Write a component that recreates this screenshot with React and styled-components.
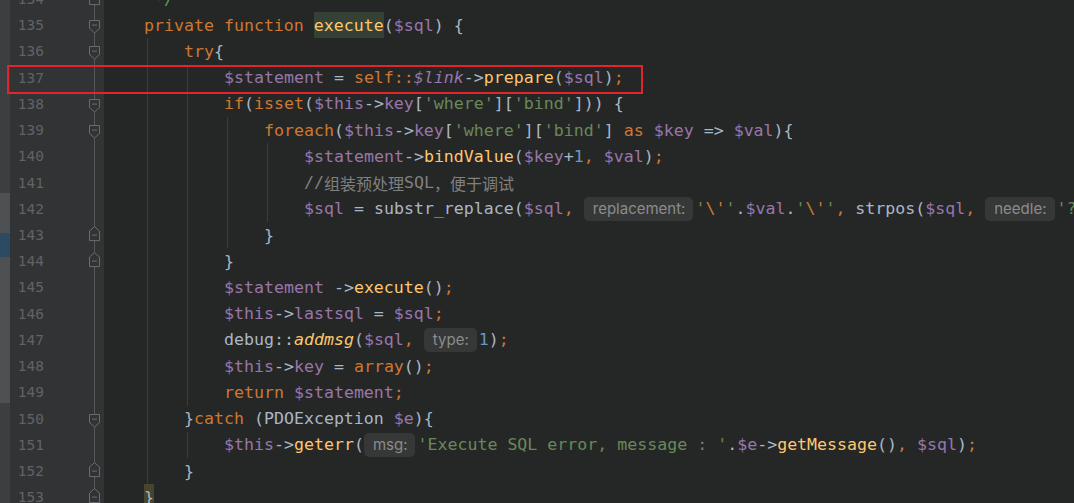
import styled, { createGlobalStyle } from "styled-components";

const LINE_H = 26.22;

const Global = createGlobalStyle`
  html, body { margin: 0; padding: 0; background: #252727; overflow: hidden; }
`;

const colors = {
  k: "#cc7832",
  f: "#ffc66d",
  v: "#9876aa",
  s: "#6a8759",
  n: "#6897bb",
  c: "#808080",
  doc: "#629755",
  d: "#a9b7c6",
};

const Editor = styled.div`
  position: relative;
  display: flex;
  width: 100%;
  height: 503px;
  overflow: hidden;
  background: #252727;
`;

const Strip = styled.div`
  width: 10px;
  flex: none;
  display: flex;
  flex-direction: column;
`;

const StripPart = styled.div`
  height: ${(p) => p.$h}px;
  flex: none;
  background: ${(p) => p.$bg};
`;

const Lines = styled.div`
  flex: 1;
  display: flex;
  flex-direction: column;
  margin-top: -14px;
  min-width: 0;
`;

const Row = styled.div`
  display: flex;
  height: ${LINE_H}px;
  flex: none;
`;

const Gutter = styled.div`
  width: 94px;
  flex: none;
  display: flex;
  background: #313335;
`;

const LineNo = styled.div`
  width: 34px;
  text-align: right;
  font-family: "DejaVu Sans Mono", monospace;
  font-size: 14.5px;
  line-height: ${LINE_H}px;
  color: #606366;
`;

const Fold = styled.div`
  width: 20px;
  margin-left: auto;
  background: linear-gradient(to right, transparent 10px, #56585a 10px, #56585a 11px, transparent 11px);
  svg { display: block; }
`;

const Code = styled.div`
  flex: 1;
  display: flex;
  align-items: stretch;
  white-space: pre;
  overflow: hidden;
  font-family: "DejaVu Sans Mono", monospace;
  font-size: 16.6px;
`;

const Indent = styled.span`
  width: 40px;
  flex: none;
  background: ${(p) =>
    p.$guide
      ? "linear-gradient(to right, transparent 3px, #3a3c3c 3px, #3a3c3c 4px, transparent 4px)"
      : "none"};
`;

const Tok = styled.span`
  display: flex;
  align-items: center;
  flex: none;
  color: ${(p) => colors[p.$k]};
  font-style: ${(p) => (p.$i ? "italic" : "normal")};
  background: ${(p) => (p.$hl === "id" ? "#344134" : p.$hl === "brace" ? "#48452f" : "transparent")};
`;

const Cjk = styled.span`
  font-family: "Noto Sans CJK SC", sans-serif;
  font-size: 16px;
`;

const Hint = styled.span`
  align-self: center;
  flex: none;
  height: 24px;
  line-height: 24px;
  padding: 0 8px 0 9px;
  margin-right: 2px;
  border-radius: 5px;
  background: #363838;
  color: #8b8c8c;
  font-family: Inter, "Open Sans", sans-serif;
  font-size: 15px;
`;

const Marker = styled.div`
  position: absolute;
  left: 7px;
  top: 65px;
  width: 636px;
  height: 29px;
  box-sizing: border-box;
  border: 2px solid #e3252b;
  pointer-events: none;
`;

function FoldMark({ type }) {
  if (!type) return null;
  return (
    <svg width="20" height={LINE_H} viewBox={`0 0 20 ${LINE_H}`}>
      {type === "open" ? (
        <path d="M5.5 8.5 H15.5 V16.5 L10.5 21 L5.5 16.5 Z" fill="#313335" stroke="#6b6d6f" />
      ) : (
        <path d="M5.5 9 L10.5 4.6 L15.5 9 V18.6 H5.5 Z" fill="#313335" stroke="#6b6d6f" />
      )}
      <path d="M8 13.1 H13" stroke="#6b6d6f" />
    </svg>
  );
}

const t = (k, text, extra = {}) => ({ k, text, ...extra });
const h = (text) => ({ hint: text });

const lines = [
  { n: 134, ind: 1, g: 0, fold: "close", toks: [t("doc", " */")] },
  { n: 135, ind: 1, g: 0, fold: "open", toks: [t("k", "private function "), t("f", "execute", { hl: "id" }), t("d", "("), t("v", "$sql"), t("d", ") {")] },
  { n: 136, ind: 2, g: 1, fold: "open", toks: [t("k", "try"), t("d", "{")] },
  { n: 137, ind: 3, g: 2, toks: [t("v", "$statement"), t("d", " = "), t("k", "self::"), t("v", "$link", { i: true }), t("d", "->"), t("f", "prepare"), t("d", "("), t("v", "$sql"), t("d", ")"), t("k", ";")] },
  { n: 138, ind: 3, g: 2, fold: "open", toks: [t("k", "if"), t("d", "("), t("k", "isset"), t("d", "("), t("v", "$this"), t("d", "->"), t("v", "key"), t("d", "["), t("s", "'where'"), t("d", "]["), t("s", "'bind'"), t("d", "])) {")] },
  { n: 139, ind: 4, g: 3, fold: "open", toks: [t("k", "foreach"), t("d", "("), t("v", "$this"), t("d", "->"), t("v", "key"), t("d", "["), t("s", "'where'"), t("d", "]["), t("s", "'bind'"), t("d", "] "), t("k", "as "), t("v", "$key"), t("d", " => "), t("v", "$val"), t("d", "){")] },
  { n: 140, ind: 5, g: 4, toks: [t("v", "$statement"), t("d", "->"), t("f", "bindValue"), t("d", "("), t("v", "$key"), t("d", "+"), t("n", "1"), t("k", ", "), t("v", "$val"), t("d", ")"), t("k", ";")] },
  { n: 141, ind: 5, g: 4, toks: [t("c", "//", { cjk: "组装预处理" }), t("c", "SQL", { cjk: "，便于调试" })] },
  { n: 142, ind: 5, g: 4, toks: [t("v", "$sql"), t("d", " = substr_replace("), t("v", "$sql"), t("k", ", "), h("replacement:"), t("s", "'"), t("k", "\\'"), t("s", "'"), t("d", "."), t("v", "$val"), t("d", "."), t("s", "'"), t("k", "\\'"), t("s", "'"), t("k", ", "), t("d", "strpos("), t("v", "$sql"), t("k", ", "), h("needle:"), t("s", "'?'"), t("d", "), "), t("v", "$sql")] },
  { n: 143, ind: 4, g: 3, fold: "close", toks: [t("d", "}")] },
  { n: 144, ind: 3, g: 2, fold: "close", toks: [t("d", "}")] },
  { n: 145, ind: 3, g: 2, toks: [t("v", "$statement"), t("d", " ->"), t("f", "execute"), t("d", "()"), t("k", ";")] },
  { n: 146, ind: 3, g: 2, toks: [t("v", "$this"), t("d", "->"), t("v", "lastsql"), t("d", " = "), t("v", "$sql"), t("k", ";")] },
  { n: 147, ind: 3, g: 2, toks: [t("d", "debug::"), t("f", "addmsg", { i: true }), t("d", "("), t("v", "$sql"), t("k", ", "), h("type:"), t("n", "1"), t("d", ")"), t("k", ";")] },
  { n: 148, ind: 3, g: 2, toks: [t("v", "$this"), t("d", "->"), t("v", "key"), t("d", " = "), t("k", "array"), t("d", "()"), t("k", ";")] },
  { n: 149, ind: 3, g: 2, toks: [t("k", "return "), t("v", "$statement"), t("k", ";")] },
  { n: 150, ind: 2, g: 1, fold: "open", toks: [t("d", "}"), t("k", "catch "), t("d", "(PDOException "), t("v", "$e"), t("d", "){")] },
  { n: 151, ind: 3, g: 2, toks: [t("v", "$this"), t("d", "->"), t("f", "geterr"), t("d", "("), h("msg:"), t("s", "'Execute SQL error, message : '"), t("d", "."), t("v", "$e"), t("d", "->"), t("f", "getMessage"), t("d", "()"), t("k", ", "), t("v", "$sql"), t("d", ")"), t("k", ";")] },
  { n: 152, ind: 2, g: 1, fold: "close", toks: [t("d", "}")] },
  { n: 153, ind: 1, g: 0, fold: "close", toks: [t("d", "}", { hl: "brace" })] },
];

const stripParts = [
  { h: 193, bg: "#3c3f41" },
  { h: 40, bg: "#4e5153" },
  { h: 24, bg: "#2c4a61" },
  { h: 146, bg: "#4e5153" },
  { h: 100, bg: "#3c3f41" },
];

export default function App() {
  return (
    <Editor>
      <Global />
      <Strip>
        {stripParts.map((s, i) => (
          <StripPart key={i} $h={s.h} $bg={s.bg} />
        ))}
      </Strip>
      <Lines>
        {lines.map((line) => (
          <Row key={line.n}>
            <Gutter>
              <LineNo>{line.n}</LineNo>
              <Fold>
                <FoldMark type={line.fold} />
              </Fold>
            </Gutter>
            <Code>
              {Array.from({ length: line.ind }).map((_, k) => (
                <Indent key={k} $guide={k >= 1 && k <= line.g} />
              ))}
              {line.toks.map((tk, i) =>
                tk.hint ? (
                  <Hint key={i}>{tk.hint}</Hint>
                ) : (
                  <Tok key={i} $k={tk.k} $i={tk.i} $hl={tk.hl}>
                    {tk.text}
                    {tk.cjk && <Cjk>{tk.cjk}</Cjk>}
                  </Tok>
                )
              )}
            </Code>
          </Row>
        ))}
      </Lines>
      <Marker />
    </Editor>
  );
}
